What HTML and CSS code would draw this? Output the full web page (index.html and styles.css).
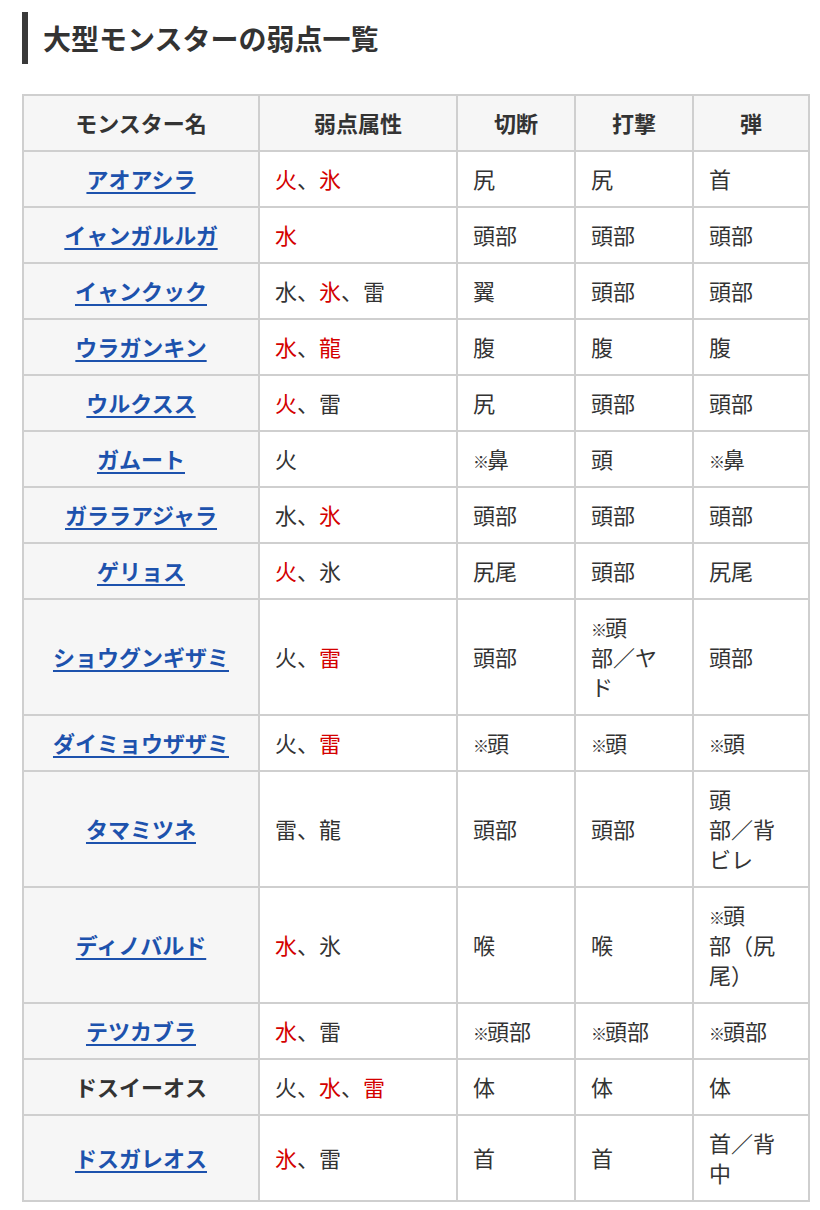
FILE: index.html
```html
<!DOCTYPE html>
<html lang="ja">
<head>
<meta charset="utf-8">
<link rel="stylesheet" href="styles.css">
</head>
<body>
<main class="page">
  <h2 class="heading">大型モンスターの弱点一覧</h2>
  <table class="weak-table">
    <colgroup>
      <col class="c-name"><col class="c-attr"><col class="c-part"><col class="c-part"><col class="c-last">
    </colgroup>
    <thead>
      <tr><th>モンスター名</th><th>弱点属性</th><th>切断</th><th>打撃</th><th>弾</th></tr>
    </thead>
    <tbody>
      <tr><th><a href="#">アオアシラ</a></th><td><span class="red">火</span>、<span class="red">氷</span></td><td>尻</td><td>尻</td><td>首</td></tr>
      <tr><th><a href="#">イャンガルルガ</a></th><td><span class="red">水</span></td><td>頭部</td><td>頭部</td><td>頭部</td></tr>
      <tr><th><a href="#">イャンクック</a></th><td>水、<span class="red">氷</span>、雷</td><td>翼</td><td>頭部</td><td>頭部</td></tr>
      <tr><th><a href="#">ウラガンキン</a></th><td><span class="red">水</span>、<span class="red">龍</span></td><td>腹</td><td>腹</td><td>腹</td></tr>
      <tr><th><a href="#">ウルクスス</a></th><td><span class="red">火</span>、雷</td><td>尻</td><td>頭部</td><td>頭部</td></tr>
      <tr><th><a href="#">ガムート</a></th><td>火</td><td><span class="note">※</span>鼻</td><td>頭</td><td><span class="note">※</span>鼻</td></tr>
      <tr><th><a href="#">ガララアジャラ</a></th><td>水、<span class="red">氷</span></td><td>頭部</td><td>頭部</td><td>頭部</td></tr>
      <tr><th><a href="#">ゲリョス</a></th><td><span class="red">火</span>、氷</td><td>尻尾</td><td>頭部</td><td>尻尾</td></tr>
      <tr><th><a href="#">ショウグンギザミ</a></th><td>火、<span class="red">雷</span></td><td>頭部</td><td><span class="note">※</span>頭<br>部／ヤ<br>ド</td><td>頭部</td></tr>
      <tr><th><a href="#">ダイミョウザザミ</a></th><td>火、<span class="red">雷</span></td><td><span class="note">※</span>頭</td><td><span class="note">※</span>頭</td><td><span class="note">※</span>頭</td></tr>
      <tr><th><a href="#">タマミツネ</a></th><td>雷、龍</td><td>頭部</td><td>頭部</td><td>頭<br>部／背<br>ビレ</td></tr>
      <tr><th><a href="#">ディノバルド</a></th><td><span class="red">水</span>、氷</td><td>喉</td><td>喉</td><td><span class="note">※</span>頭<br>部（尻<br>尾）</td></tr>
      <tr><th><a href="#">テツカブラ</a></th><td><span class="red">水</span>、雷</td><td><span class="note">※</span>頭部</td><td><span class="note">※</span>頭部</td><td><span class="note">※</span>頭部</td></tr>
      <tr><th>ドスイーオス</th><td>火、<span class="red">水</span>、<span class="red">雷</span></td><td>体</td><td>体</td><td>体</td></tr>
      <tr><th><a href="#">ドスガレオス</a></th><td><span class="red">氷</span>、雷</td><td>首</td><td>首</td><td>首／背<br>中</td></tr>
    </tbody>
  </table>
</main>
</body>
</html>
```

FILE: styles.css
```css
html, body {
  margin: 0;
  padding: 0;
  background: #fff;
}

body {
  font-family: "Noto Sans CJK JP", "Noto Sans", sans-serif;
  color: #333;
}

.page {
  padding: 12px 0 0 22px;
}

.heading {
  margin: 0;
  border-left: 6px solid #3a3a3a;
  padding-left: 15px;
  font-size: 28px;
  font-weight: 700;
  line-height: 52px;
  height: 52px;
  color: #333;
}

.weak-table {
  margin-top: 30px;
  border-collapse: collapse;
  table-layout: fixed;
  width: 786px;
  font-size: 22px;
  line-height: 30px;
}

.c-name { width: 236px; }
.c-attr { width: 198px; }
.c-part { width: 118px; }
.c-last { width: 116px; }

.weak-table th,
.weak-table td {
  border: 2px solid #cfcfcf;
  padding: 11px 14px 13px;
  vertical-align: middle;
}

.weak-table thead th {
  background: #f6f6f6;
  text-align: center;
  font-weight: 700;
}

.weak-table tbody th {
  background: #f6f6f6;
  text-align: center;
  font-weight: 700;
}

.weak-table td {
  text-align: left;
  font-weight: 400;
  padding-left: 15px;
}

.weak-table a {
  color: #1d52ad;
  text-decoration: underline;
  text-decoration-thickness: 2px;
  text-underline-offset: 4px;
}

.red {
  color: #d40000;
}

.note {
  font-size: 16px;
  font-weight: 700;
  line-height: 1;
  margin-right: -2px;
}
```
